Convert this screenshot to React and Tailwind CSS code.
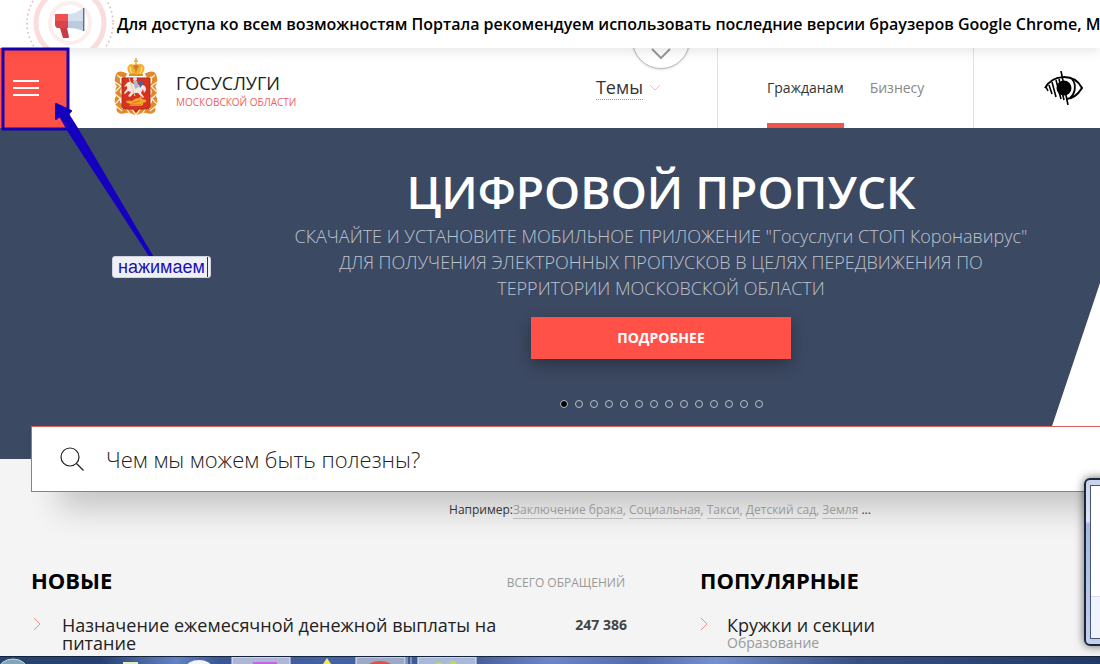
import React, { useState } from 'react';

const SLIDES = 14;

const examples = ['Заключение брака', 'Социальная', 'Такси', 'Детский сад', 'Земля'];

function Megaphone() {
  return (
    <svg viewBox="0 0 88 48" className="w-[88px] h-12 shrink-0" fill="none" aria-hidden="true">
      <circle cx="44" cy="23" r="43" stroke="#e3b9bf" strokeWidth="1.6" strokeDasharray="1.6 3" />
      <circle cx="44" cy="23" r="34" stroke="#fbdcdc" strokeWidth="5" />
      <circle cx="44" cy="23" r="20" stroke="#fdeeee" strokeWidth="4" />
      <path d="M29 14h13v14H33c-3 0-4-2-4-5z" fill="#f0504f" />
      <path d="M29 21h13v7H33c-3 0-4-2-4-5z" fill="#d9434c" />
      <path d="M34 28h7l2 9q0 1-1 1h-5z" fill="#c93a45" />
      <path d="M42 14c6 0 11-3 15-6v13H42z" fill="#d5e0ef" />
      <path d="M42 21h15v10c-4-2-9-3-15-3z" fill="#bccade" />
      <rect x="57" y="8" width="1.4" height="23" fill="#5c6f8e" />
    </svg>
  );
}

function Emblem() {
  return (
    <svg viewBox="0 0 44 58" className="w-11 h-[58px] shrink-0" fill="none" aria-hidden="true">
      {/* ribbon wreath */}
      <g stroke="#e08a2c" strokeWidth="5">
        <path d="M12 18Q5 14 4 18Q2 25 6 28Q2 33 5 38Q1 44 6 48Q3 54 9 53Q16 51 22 55" />
        <path d="M32 18Q39 14 40 18Q42 25 38 28Q42 33 39 38Q43 44 38 48Q41 54 35 53Q28 51 22 55" />
      </g>
      <g stroke="#fff3df" strokeWidth="1.2">
        <path d="M3 17l6 5M1 24l7 5M7 28l-6 6M1 36l6 5M7 40l-6 6M2 48l6 5M12 50l4 6M18 51l3 5" />
        <path d="M41 17l-6 5M43 24l-7 5M37 28l6 6M43 36l-6 5M37 40l6 6M42 48l-6 5M32 50l-4 6M26 51l-3 5" />
      </g>
      {/* crown */}
      <path d="M16 16C12 12 13 7 17 6q5 1 5 1 1-1 5-1c4 1 5 6 1 10z" fill="#eeb22e" />
      <path d="M19 8q3 5 3 8 0-3 3-8l-3-2z" fill="#d9772a" />
      <path d="M16 9q0 4 2 6M28 9q0 4-2 6" stroke="#fff0bd" />
      <path d="M15 17h14" stroke="#dc9323" strokeWidth="2" />
      <path d="M22 0v6M20 3h4" stroke="#dfab41" strokeWidth="1.4" />
      {/* shield */}
      <path d="M8 20h28v28q0 3-4 3h-7l-3 3-3-3h-7q-4 0-4-3z" fill="#d6321f" stroke="#a92c20" />
      {/* rider */}
      <path d="M12 26q3-4 6-1l3 2h7q4 0 4 5l-2 3-1-4-2 4 3 4-1 1-5-5h-4l-4 4-2-1 3-4-3-1-3 3-1-1 3-4v-3l-3 1z" fill="#f5e8e4" />
      <path d="M19 23h4l2 6-4 2z" fill="#aeb9ca" />
      <path d="M24 23q5-1 5 3l-3 4z" fill="#4962a0" />
      <circle cx="21" cy="21" r="2" fill="#d8dce5" />
      <path d="M15 20l6 18" stroke="#e9cf97" />
      {/* dragon */}
      <path d="M12 43q4-1 6 0 3-3 7-3l2-2 1 3 4 1v2l-3 1q1 3-4 3H15l2-2-4-1z" fill="#f0a52d" />
      <path d="M18 45l8-2M16 47h11" stroke="#d6691f" strokeWidth="0.8" />
    </svg>
  );
}

function LowVision() {
  return (
    <svg viewBox="0 0 40 34" className="w-10 h-[34px]" fill="none" stroke="#000" aria-hidden="true">
      <path d="M1 17C9 3 30 2 38 17C33 25 28 28 22 28" strokeWidth="2" />
      <path d="M28 8C33 14 31 23 26 27" strokeWidth="1.8" />
      <circle cx="20" cy="17" r="7.5" fill="#000" stroke="none" />
      <path d="M17 0l7 34" strokeWidth="1.6" />
      <path d="M2 16l2 4M5 14l3 9M8 11l4 15M12 9l5 19M15 8l5 21" strokeWidth="1.6" />
    </svg>
  );
}

function Chevron({ className, d = 'M1 1l5 5 5-5', box = '0 0 12 7', strokeWidth = 1 }) {
  return (
    <svg viewBox={box} className={className} fill="none" stroke="currentColor" strokeWidth={strokeWidth} aria-hidden="true">
      <path d={d} />
    </svg>
  );
}

function Arrow() {
  return <Chevron className="w-2 h-4 mt-[9px] shrink-0 text-[#ee8b88]" box="0 0 8 16" d="M1 2l6 6-6 6" />;
}

function Notice() {
  return (
    <div className="relative z-10 flex h-12 items-center overflow-hidden bg-white pl-[26px] shadow-[0_2px_12px_rgba(0,0,0,0.12)]">
      <Megaphone />
      <p className="ml-[3px] whitespace-nowrap text-[16px] font-semibold text-black">
        Для доступа ко всем возможностям Портала рекомендуем использовать последние версии браузеров Google Chrome, M
      </p>
    </div>
  );
}

function Header() {
  return (
    <header className="relative flex h-20 bg-white">
      <button type="button" aria-label="Меню" className="flex w-[68px] flex-col justify-center gap-[5px] bg-[#ff5147] pl-[13px]">
        <span className="h-0.5 w-[26px] bg-white" />
        <span className="h-0.5 w-[26px] bg-white" />
        <span className="h-0.5 w-[26px] bg-white" />
      </button>
      <a href="#" className="ml-[46px] flex items-center pb-0.5">
        <Emblem />
        <span className="ml-[18px] flex flex-col pt-2.5">
          <span className="text-[18px] leading-5 text-[#222]">ГОСУСЛУГИ</span>
          <span className="text-[10px] leading-[18px] text-[#f0625b]">МОСКОВСКОЙ ОБЛАСТИ</span>
        </span>
      </a>
      <div className="flex flex-1 items-center justify-end pb-0.5">
        <button type="button" className="mr-14 flex items-center gap-1.5 text-[18px] text-[#333]">
          <span className="border-b border-dotted border-[#999] leading-6">Темы</span>
          <Chevron className="h-[7px] w-3 text-[#e8c3c0]" />
        </button>
      </div>
      <button
        type="button"
        aria-label="Развернуть"
        className="absolute -top-[37px] left-[632px] flex size-[58px] items-end justify-center rounded-full border border-[#bbb] bg-white pb-2 shadow-sm"
      >
        <Chevron className="h-3 w-5 text-[#999]" box="0 0 20 12" d="M1 1l9 9 9-9" strokeWidth={2} />
      </button>
      <nav className="flex w-[256px] gap-[26px] border-l border-[#e2e2e2] pl-[49px] text-[14px]">
        <a href="#" className="flex items-center border-b-[5px] border-[#f0554c] pt-[3px] text-[#333]">Гражданам</a>
        <a href="#" className="flex items-center pb-0.5 text-[#888]">Бизнесу</a>
      </nav>
      <div className="flex w-[127px] items-center border-l border-[#e2e2e2] pl-[70px]">
        <button type="button" aria-label="Версия для слабовидящих">
          <LowVision />
        </button>
      </div>
    </header>
  );
}

function Hero() {
  const [slide, setSlide] = useState(0);
  return (
    <section className="relative flex h-[331px] flex-col items-center bg-[#3c4962] pl-[222px] text-center">
      <div className="absolute bottom-0 right-0 h-[176px] w-[59px] bg-white [clip-path:polygon(100%_0,100%_100%,0_100%)]" />
      <h1 className="mt-[31px] text-[46px] font-semibold leading-[64px] text-white">ЦИФРОВОЙ ПРОПУСК</h1>
      <p className="w-[760px] text-[18px] font-[350] leading-[26px] text-[#bcc3cf]">
        СКАЧАЙТЕ И УСТАНОВИТЕ МОБИЛЬНОЕ ПРИЛОЖЕНИЕ "Госуслуги СТОП Коронавирус"
        <br />
        ДЛЯ ПОЛУЧЕНИЯ ЭЛЕКТРОННЫХ ПРОПУСКОВ В ЦЕЛЯХ ПЕРЕДВИЖЕНИЯ ПО
        <br />
        ТЕРРИТОРИИ МОСКОВСКОЙ ОБЛАСТИ
      </p>
      <button type="button" className="mt-4 h-[42px] w-[260px] bg-[#ff5147] pb-0.5 text-[14px] font-bold text-white shadow-[0_6px_16px_rgba(0,0,0,0.3)]">
        ПОДРОБНЕЕ
      </button>
      <div className="mt-[41px] flex gap-[7px]">
        {Array.from({ length: SLIDES }, (_, i) => (
          <button
            key={i}
            type="button"
            aria-label={`Слайд ${i + 1}`}
            onClick={() => setSlide(i)}
            className={`size-2 rounded-full border border-[#b9c0cc] ${i === slide ? 'bg-black' : ''}`}
          />
        ))}
      </div>
    </section>
  );
}

function Search() {
  return (
    <form className="relative -mr-px -mt-[33px] ml-[31px] flex h-[66px] items-center border border-[#d9605c] bg-white pl-7 shadow-[20px_24px_32px_-8px_rgba(0,0,0,0.2)]">
      <svg viewBox="0 0 24 24" className="size-6 shrink-0" fill="none" stroke="#222" strokeWidth="1.2" aria-hidden="true">
        <circle cx="10" cy="10" r="9" />
        <path d="M16.5 16.5l7 7" />
      </svg>
      <input
        type="text"
        aria-label="Поиск"
        placeholder="Чем мы можем быть полезны?"
        className="ml-[22px] flex-1 text-[22px] font-light text-black outline-none placeholder:text-[#222]"
      />
    </form>
  );
}

function Popular() {
  return (
    <div className="grid grid-cols-[596px_1fr] gap-x-[73px] pl-[31px] pt-11">
      <section>
        <div className="flex items-center justify-between">
          <h2 className="text-[22px] font-bold leading-8 text-black">НОВЫЕ</h2>
          <span className="pr-0.5 pt-1.5 text-[12px] leading-5 text-[#999]">ВСЕГО ОБРАЩЕНИЙ</span>
        </div>
        <div className="mt-[11px] flex items-start pl-0.5">
          <Arrow />
          <a href="#" className="ml-[21px] mt-[9px] w-[460px] text-[18px] leading-[18px] text-[#222]">
            Назначение ежемесячной денежной выплаты на питание
          </a>
          <span className="ml-auto mt-2 text-[14px] font-bold leading-5 text-[#444]">247 386</span>
        </div>
      </section>
      <section>
        <h2 className="text-[22px] font-bold leading-8 text-black">ПОПУЛЯРНЫЕ</h2>
        <div className="mt-[11px] flex items-start">
          <Arrow />
          <div className="ml-[19px] mt-[9px] flex flex-col">
            <a href="#" className="text-[18px] leading-[18px] text-[#222]">Кружки и секции</a>
            <span className="text-[14px] leading-[18px] text-[#999]">Образование</span>
          </div>
        </div>
      </section>
    </div>
  );
}

function Taskbar() {
  return (
    <footer className="relative z-20 flex h-2 shrink-0 overflow-hidden border-t border-[#14233c] bg-[linear-gradient(90deg,#27446d,#25406e_9%,#6482c4_16%,#3b5591_20%,#4462a5_30%,#40588e_42%,#6d86c9_50%,#526ba9_58%,#7590ce_65%,#37507f_78%,#203964)]">
      <svg viewBox="0 0 480 7" className="h-[7px] w-[480px]" aria-hidden="true">
        <ellipse cx="13" cy="14" rx="15" ry="12" fill="#80a5b5" stroke="#c5dde5" />
        <rect x="123" y="5" width="15" height="3" fill="#e5eebc" />
        <ellipse cx="199" cy="11" rx="13" ry="8" fill="#f1f4f8" />
        <rect x="232" y="0" width="58" height="9" fill="#adb7d5" stroke="#e6ebf6" />
        <rect x="253" y="5" width="24" height="3" fill="#c468df" />
        <path d="M323 7l4-6 4 6z" fill="#f1e955" />
        <rect x="356" y="0" width="49" height="9" fill="#9caac5" stroke="#e6ebf6" />
        <ellipse cx="380" cy="11" rx="13" ry="7" fill="#e05045" />
        <path d="M407 0v8M411 0v8" stroke="#bbc9e2" />
        <rect x="418" y="0" width="58" height="9" fill="#a9b8d9" stroke="#e6ebf6" />
        <circle cx="439" cy="9" r="4" fill="#bfdc58" />
        <circle cx="453" cy="8" r="4" fill="#bfdc58" />
      </svg>
    </footer>
  );
}

// Marker box, arrow and caption laid over the page
function Annotation() {
  return (
    <div className="pointer-events-none absolute left-0 top-0 z-20">
      <svg viewBox="0 0 220 290" className="h-[290px] w-[220px]" fill="none" aria-hidden="true">
        <rect x="3" y="49" width="65" height="80" stroke="#1500b0" strokeWidth="3" />
        <path d="M56 104l15 7-3 3 7 11 77 131h-2L69 132 60 116l-4 3z" fill="#1500c0" stroke="#1500c0" strokeWidth="2" strokeLinejoin="round" />
      </svg>
      <span className="absolute left-[112px] top-[256px] flex rounded-[3px] border border-[#cfd3e0] bg-[#eef0f6] pl-[5px] font-['Liberation_Sans',sans-serif] text-[18px] leading-5 text-[#1d10b4]">
        нажимаем
        <span className="ml-0.5 mr-0.5 w-px bg-[#333]" />
      </span>
    </div>
  );
}

function SideWindow() {
  return (
    <aside className="absolute -right-2 top-[478px] z-20 flex h-[168px] w-6 rounded-l-md border-2 border-[#1b2638] bg-[linear-gradient(180deg,#c6d3ea,#dbe5f5_25%,#a6b8e0_27%,#c2d0ee)] py-[5px] pl-1 shadow-[0_0_10px_rgba(0,0,0,0.6)]">
      <div className="flex flex-1 flex-col border border-[#47536f] bg-white">
        <div className="mt-auto h-[42px] border-t border-[#d6dcec] bg-[#eff3fb]" />
      </div>
    </aside>
  );
}

export default function App() {
  return (
    <div className="relative flex h-screen flex-col overflow-hidden bg-[#f4f4f4] font-['Open_Sans',sans-serif]">
      <Notice />
      <main className="min-h-0 flex-1">
        <Header />
        <Hero />
        <Search />
        <p className="relative pl-[220px] pt-2 text-center text-[12px] leading-5 text-[#333]">
          Например:
          {examples.map((name, i) => (
            <span key={name} className="text-[#999]">
              {i > 0 && ', '}
              <a href="#" className="border-b border-[#bbb]">{name}</a>
            </span>
          ))}{' '}
          ...
        </p>
        <Popular />
      </main>
      <Taskbar />
      <Annotation />
      <SideWindow />
    </div>
  );
}
